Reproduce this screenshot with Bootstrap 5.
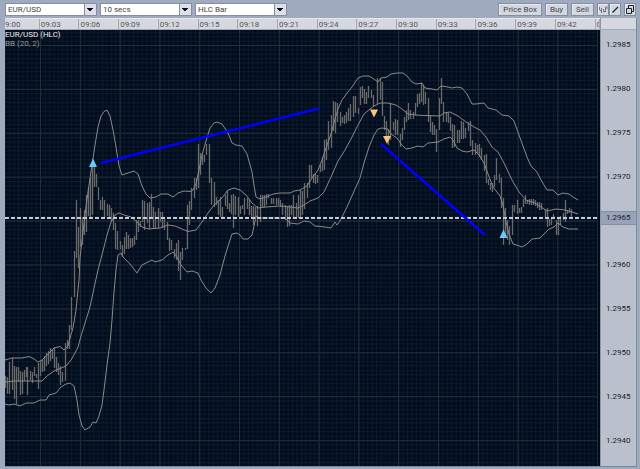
<!DOCTYPE html>
<html lang="en">
<head>
<meta charset="utf-8">
<meta name="viewport" content="width=device-width, initial-scale=1">
<title>EUR/USD chart</title>
<link href="https://cdn.jsdelivr.net/npm/bootstrap@5.3.0/dist/css/bootstrap.min.css" rel="stylesheet">
<style>
body{background:#a0aabe;font-family:Roboto,"Liberation Sans",Arial,sans-serif;font-size:8px;line-height:12px;color:#444}
.toolbar{padding:3px 4px 2px 5px;gap:3px}
.picker,.tool{height:13px;border:1px solid #858fa3;border-radius:0;font-size:8px;line-height:11px;color:#444}
.picker{appearance:none;width:92px;padding:0 14px 0 2px;
 background:linear-gradient(#111,#111) right 3px top 4px/6px 1px no-repeat,
 linear-gradient(#111,#111) right 4px top 5px/4px 1px no-repeat,
 linear-gradient(#111,#111) right 5px top 6px/2px 1px no-repeat,
 linear-gradient(#858fa3,#858fa3) right 11px top 0/1px 11px no-repeat,
 linear-gradient(#dde0e8,#dde0e8) right 0 top 0/11px 11px no-repeat,#fff}
.tool{padding:0 4px;background:#d3d7e0;box-shadow:inset 1px 1px #e6e9ef}
.tool:hover{background:#e6e9ef}
.tool.glyph{width:12px;padding:0}
.tool svg{display:block;width:10px;height:11px}
.tool + .joined{margin-left:-3px}
.workspace{margin:0 3px 2px 5px;border-bottom:1px solid #7e889b;border-right:1px solid #7e889b;min-height:0}
.times{height:12px;background:#d5d8df;border-top:1px solid #e7e9ee;border-bottom:1px solid #a3a9b5;line-height:11px;color:#555}
.times div{width:0;border-right:1px solid #a3a8b2;padding-left:1px;white-space:nowrap;overflow:hidden}
.side{width:36px;flex:none}
.corner{background:#d5d8df;height:12px;border-left:1px solid #8e97a8;border-bottom:1px solid #a3a9b5}
.prices{background:#bbc0ce;border-left:1px solid #8e97a8;color:#222}
.prices div{height:0;padding-left:5px}
.prices .last{background:#98a3ba;border:solid #8590a8;border-width:1px 0}
.plot{background:#000b1c;overflow:hidden;min-height:0}
.plot svg{display:block;width:100%;height:100%}
.legend{top:0;left:0;line-height:9px;color:#999}
.legend b{font-weight:400;color:#eee}
</style>
<script src="https://cdn.jsdelivr.net/npm/bootstrap@5.3.0/dist/js/bootstrap.bundle.min.js"></script>
</head>
<body class="vh-100 d-flex flex-column overflow-hidden">
<header class="toolbar d-flex align-items-center">
 <select class="picker" aria-label="Instrument"><option>EUR/USD</option></select>
 <select class="picker" aria-label="Interval"><option>10 secs</option></select>
 <select class="picker" aria-label="Chart style"><option>HLC Bar</option></select>
 <button class="tool ms-auto" type="button">Price Box</button>
 <button class="tool" type="button">Buy</button>
 <button class="tool" type="button">Sell</button>
 <button class="tool glyph" type="button" aria-label="Indicators"><svg viewBox="0 0 10 11" fill="none" stroke="#777"><path d="M1.500 3V6M3.500 4V9M5.500 5V8M7.500 3V8M9 2V5M2 6.500H4M5 7.500H8"/></svg></button>
 <button class="tool glyph joined" type="button" aria-label="Draw line"><svg viewBox="0 0 10 11"><path d="M2.500 8.500L8 3" stroke="#222" stroke-width="1.200"/></svg></button>
 <button class="tool glyph" type="button" aria-label="Detach window"><svg viewBox="0 0 10 11" fill="#d3d7e0" stroke="#222"><path d="M3.500 1.500H8.500V7.500H3.500Z"/><path d="M1.500 4.500H6.500V9.500H1.500Z"/></svg></button>
</header>
<main class="workspace d-flex flex-grow-1">
 <div class="d-flex flex-column flex-grow-1 overflow-hidden">
  <div class="times d-flex" id="times"></div>
  <div class="plot position-relative flex-grow-1">
   <svg viewBox="5 30 595 436" preserveAspectRatio="none" role="img" aria-label="EUR/USD price bars with Bollinger bands" fill="none">
    <defs>
     <pattern id="fine" x="0.400" y="1" width="4.420" height="4.390" patternUnits="userSpaceOnUse"><path d="M0 .5H4.420M.5 0V4.390" stroke="#0d1a2b"/></pattern>
     <pattern id="coarse" x="0.200" y="1.100" width="39.800" height="43.900" patternUnits="userSpaceOnUse"><path d="M0 .5H39.800M.5 0V43.900" stroke="#222d3b"/></pattern>
    </defs>
    <rect x="5" y="30" width="593" height="436" fill="url(#fine)"/>
    <rect x="5" y="30" width="593" height="436" fill="url(#coarse)"/>
    <path id="bars" stroke="#696969" stroke-width="1.300"/>
    <g id="bands" stroke="#8c8987"></g>
    <path d="M5 218H598" stroke="#c6cad8" stroke-width="2" stroke-dasharray="4 2"/>
    <path d="M101 163L319 108.500M381 144L485 235" stroke="#00f" stroke-width="2.500"/>
    <path d="M93 158.500L97 167H89ZM503.500 229.500L507.500 238H499.500Z" fill="#6bc8fb"/>
    <path d="M370 109.500H378L374 117.500ZM383 136H391L387 144Z" fill="#fcc375"/>
   </svg>
   <div class="legend position-absolute"><b>EUR/USD (HLC)</b><br>BB (20, 2)</div>
  </div>
 </div>
 <aside class="side d-flex flex-column">
  <div class="corner"></div>
  <div class="prices d-flex flex-column flex-grow-1" id="prices"></div>
 </aside>
</main>
<script>
// Time header: relative widths of the three-minute columns
const times=document.getElementById('times');
function cell(parent,text,grow,cls){const d=document.createElement('div');d.textContent=text;d.style.flexGrow=grow;if(cls)d.className=cls;parent.append(d);return d}
cell(times,'9:00',356).classList.add('ps-0');
for(let m=3;m<=42;m+=3)cell(times,'09:'+String(m).padStart(2,'0'),398);
cell(times,'0',25);

// Price scale: each label sits at the bottom of its row
const prices=document.getElementById('prices');
[['1.2985',21],['1.2980',44],['1.2975',44],['1.2970',44],['1.2965',42],['1.2960',46],['1.2955',44],['1.2950',44],['1.2945',44],['1.2940',44]].forEach(([label,grow])=>{
 const row=cell(prices,'',grow);
 row.className='d-flex flex-column justify-content-end p-0';
 const tag=document.createElement('div');
 tag.textContent=label;tag.className='h-auto'+(label==='1.2965'?' last':'');
 row.append(tag);
});
cell(prices,'',19);

// Bars: x, high, low
const bars=`5,376,388 7.5,377,394 9.5,362,394 12,358,390 14,366,399 16,367,404 18,367,382 20,371,395 22,372,394 24,370,381 26,367,377 27.5,367,395 30,371,380 32,372,383 34,367,376 36.5,374,378 38.5,363,389 40.5,361,376 42.5,360,372 44.5,356,371 46.5,353,366 48.5,351,364 50.5,348,361 52.5,349,359 54.5,347,368 56.5,357,372 58.5,363,375 60.5,366,385 62.5,372,382 65,343,381 67,340,349 69,325,349 71.5,297,330 74,251,297 76.5,200,258 78.5,227,268 80.5,208,247 82.5,217,245 84.500,210,235 86.5,195,232 88.5,187,216 90.5,178,217 92.5,163,215 94.5,163,187 96.5,174,187 98.5,187,200 100.5,200,210 102.5,197,210 104.5,200,218 107,204,216 109,205,217 111.5,208,222 113.5,213,230 115.5,223,249 117.5,231,250 120,241,249 122,245,257 124,237,254 126,232,249 128,235,249 130,238,248 132,238,247 134,236,245 136,220,240 138,220,232 140,221,227 142.5,200,222 144.5,201,230 147,203,223 149,202,229 151,194,217 153,207,228 155.5,212,229 158,208,228 160,212,222 162,212,228 164.500,218,230 167,222,240 169.5,238,251 171.5,240,250 174,249,258 176,243,260 178,240,271 180,252,280 182.5,248,260 185,248,250 187,205,249 189,201,225 191.5,188,210 194,178,198 196,178,190 198,144,188 200,153,175 202,153,165 204,155,162 206,144,155 209,144,183 211,178,205 214,182,207 216,197,205 218.5,200,215 220.5,197,217 222.5,207,218 225,195,206 227,191,209 229,203,212 231,195,214 233.5,194,228 235.5,196,215 238,197,217 240,206,214 242.5,205,209 244.5,198,215 247,198,209 249.5,200,215 251.5,206,217 253.5,206,225 255.5,207,218 257.5,206,226 260,195,222 262,195,207 264,195,207 266,194,205 268.5,194,198 271,198,204 273.5,198,204 276,198,205 278,198,205 280,200,207 282.5,203,215 285,205,220 287,206,227 289,205,226 291,205,215 293.5,195,218 296,203,217 298,195,218 300,190,217 302,191,215 304.5,183,209 307,183,198 309.5,165,188 311.500,165,178 313.500,174,183 315.500,174,184 317.5,175,183 320,165,172 322,157,171 324,140,170 326,139,160 328.5,121,150 331,115,148 333,101,131 335.5,102,133 337.5,103,122 340,112,126 342,117,123 344,115,124 346.5,112,123 348.500,108,121 350.5,104,121 353,96,117 355.5,96,113 358,108,114 360,87,105 362,86,98 364,89,104 366.5,92,104 368.5,86,98 371,90,98 373,95,107 377,78,104 380,78,100 382,82,116 384,116,130 386,121,137 388.500,130,145 390.5,103,140 393,122,130 395.5,119,135 397.5,120,135 400,134,147 402,128,140 404,117,130 406,110,122 408,103,120 410.5,110,119 413,112,119 415,103,115 417,94,107 419,93,104 421.5,83,102 423.5,85,105 425.5,92,104 428,98,122 430,115,132 432,122,135 434,125,135 436,129,152 439,98,130 441.500,78,104 443.500,102,122 446,112,122 448,113,123 450,117,131 452,124,148 454,125,147 457,130,143 459,130,143 461,121,139 463,122,139 465,128,138 468,122,131 470,121,146 472,140,155 475,143,155 477,145,153 479,144,157 481,148,160 484,155,171 486,154,183 488,179,185 490,183,190 492,183,192 494,175,187 496.5,158,180 499,174,183 501,178,208 503,198,245 505,208,236 507,220,240 509.500,226,245 512,205,235 514,205,212 517,200,214 519,208,213 521,207,213 523,199,207 525,195,204 527,200,204 529,199,205 531,199,205 533,199,205 535,200,206 537,202,208 539,202,210 541,203,210 545,209,217 547,208,227 549,219,226 551,218,225 553,214,219 556,220,235 558,218,235 560,216,225 563,213,220 565,200,222 567,210,214 569,208,213 571,209,218`;
document.getElementById('bars').setAttribute('d',bars.split(' ').map(b=>{const [x,h,l]=b.split(',');return 'M'+(Math.floor(x)+.5)+' '+h+'V'+l}).join(''));

// Bollinger bands: upper, middle, lower
[`5,360 12,358 22,358 29,356.5 34,359 38,362 42,360 48,354 54,348 60,346.5 64,350 68,346 70,338 73,328 76,310 79,280 80,258 83,232 86,207 89,185 92,165 95,145 98,127 101,116 104,111.5 107,110 110,116 113,130 116,147 119,166 122,175 128,173 134,171 138,174 142,186 146,194 150,198 156,197 161,194 168,194 173,197 178,193 184,191 190,191.5 193,190 196,184 199,170 202,155 206,141 210,128 214,123 217,122 222,124 228,133 232,143 236,145 242,146 247,154 252,172 254,185 256,197 260,199 266,197 273,194 280,193 290,193 294,191 300,190 307,186 312,178 318,170 322,160 326,148 331,134 335,119 338,109 342,100 347,93 352,87 358,78 363,76 369,76 374,79 378,82 381,78 387,77 391,74 397,73 403,73 407,76 412,82 416,84 422,83 425,88 432,89 437,90 441,86 448,87 452,88 457,87 462,88 467,94 472,104 476,104 484,103 488,108 496,110 502,115 509,116 514,121 519,135 523,146 527,157 531,166 537,172 541,180 547,190 553,190 558,195 563,193 569,194 573,197 578,200`,
`5,382 15,381 25,381 35,381 42,381 47,376 54,371 60,368.5 66,366 71,360 75,353 78,347 81,336 85,323 90,307 94,288 98,270 103,251 107,235 111,222 115,215 119,213 124,215 131,217 137,222 142,227 149,229 160,228 168,225 175,226 182,229 188,231.5 196,230 202,222 208,213 214,205 222,198 228,190 234,188 240,190 246,195 252,203 258,208 266,207 280,206 290,207 298,208 304,205 310,201 318,198 324,192 331,177 338,161 345,150 352,137 358,125 364,114 370,109 374,106 380,103 388,103 396,105 402,109 408,114 416,115 425,115.5 440,116 444,113 450,112 458,116 466,122 474,127 480,130 486,137 492,147 498,152 504,163 512,180 519,192 526,200 535,203 541,207 547,211 556,209 565,210 572,212 578,214`,
`5,404 9,405 14,404 20,406 26,403 34,403 40,400 46,400 49,395 56,393 61,387 66,384 70,383 74,386 77,400 79,415 82,426 85,430 90,427 93,422 96,423 99,416 102,405 104,390 107,365 110,343 112,320 114,292 116,270 118,255 121,253 123,257 130,264 137,273 142,265 148,262 152,260 155,262 162,260 168,255 173,252 177,257 181,265 187,272 192,271 198,273 201,280 206,288 211,293 215,288 220,275 225,256 229,243 232,234 237,233 240,235 243,239 248,239 252,235 254,226 256,216 260,218 285,218 290,223 298,224 304,221 310,222 315,226 325,227 331,228 335,222 337,225 340,221 347,207 355,189 360,178 364,163 369,147 374,135 378,129 382,128 388,129 391,134 397,138 401,144 406,149 412,148 418,146 423,147 428,143 438,142 444,139 450,137 453,140 457,148 462,151 467,152 474,150 479,155 484,163 488,174 493,187 500,196 503,205 506,222 509,234 513,244 518,245.5 522,247 527,244 532,239 540,238 545,233 549,229 554,227 558,223 563,227 569,229 578,229`].forEach(p=>{
 const line=document.createElementNS('http://www.w3.org/2000/svg','polyline');
 line.setAttribute('points',p);
 document.getElementById('bands').append(line);
});
</script>
</body>
</html>
